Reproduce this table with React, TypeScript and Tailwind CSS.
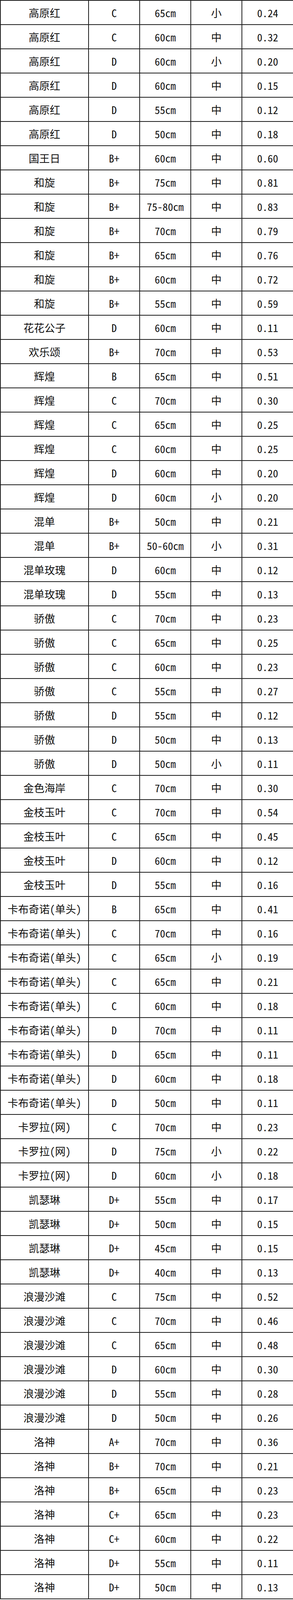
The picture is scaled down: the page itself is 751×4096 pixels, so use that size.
import React from "react"

type Row = [string, string, string, string, string]

const rows: Row[] = [
  ["高原红", "C", "65cm", "小", "0.24"],
  ["高原红", "C", "60cm", "中", "0.32"],
  ["高原红", "D", "60cm", "小", "0.20"],
  ["高原红", "D", "60cm", "中", "0.15"],
  ["高原红", "D", "55cm", "中", "0.12"],
  ["高原红", "D", "50cm", "中", "0.18"],
  ["国王日", "B+", "60cm", "中", "0.60"],
  ["和旋", "B+", "75cm", "中", "0.81"],
  ["和旋", "B+", "75-80cm", "中", "0.83"],
  ["和旋", "B+", "70cm", "中", "0.79"],
  ["和旋", "B+", "65cm", "中", "0.76"],
  ["和旋", "B+", "60cm", "中", "0.72"],
  ["和旋", "B+", "55cm", "中", "0.59"],
  ["花花公子", "D", "60cm", "中", "0.11"],
  ["欢乐颂", "B+", "70cm", "中", "0.53"],
  ["辉煌", "B", "65cm", "中", "0.51"],
  ["辉煌", "C", "70cm", "中", "0.30"],
  ["辉煌", "C", "65cm", "中", "0.25"],
  ["辉煌", "C", "60cm", "中", "0.25"],
  ["辉煌", "D", "60cm", "中", "0.20"],
  ["辉煌", "D", "60cm", "小", "0.20"],
  ["混单", "B+", "50cm", "中", "0.21"],
  ["混单", "B+", "50-60cm", "小", "0.31"],
  ["混单玫瑰", "D", "60cm", "中", "0.12"],
  ["混单玫瑰", "D", "55cm", "中", "0.13"],
  ["骄傲", "C", "70cm", "中", "0.23"],
  ["骄傲", "C", "65cm", "中", "0.25"],
  ["骄傲", "C", "60cm", "中", "0.23"],
  ["骄傲", "C", "55cm", "中", "0.27"],
  ["骄傲", "D", "55cm", "中", "0.12"],
  ["骄傲", "D", "50cm", "中", "0.13"],
  ["骄傲", "D", "50cm", "小", "0.11"],
  ["金色海岸", "C", "70cm", "中", "0.30"],
  ["金枝玉叶", "C", "70cm", "中", "0.54"],
  ["金枝玉叶", "C", "65cm", "中", "0.45"],
  ["金枝玉叶", "D", "60cm", "中", "0.12"],
  ["金枝玉叶", "D", "55cm", "中", "0.16"],
  ["卡布奇诺(单头)", "B", "65cm", "中", "0.41"],
  ["卡布奇诺(单头)", "C", "70cm", "中", "0.16"],
  ["卡布奇诺(单头)", "C", "65cm", "小", "0.19"],
  ["卡布奇诺(单头)", "C", "65cm", "中", "0.21"],
  ["卡布奇诺(单头)", "C", "60cm", "中", "0.18"],
  ["卡布奇诺(单头)", "D", "70cm", "中", "0.11"],
  ["卡布奇诺(单头)", "D", "65cm", "中", "0.11"],
  ["卡布奇诺(单头)", "D", "60cm", "中", "0.18"],
  ["卡布奇诺(单头)", "D", "50cm", "中", "0.11"],
  ["卡罗拉(网)", "C", "70cm", "中", "0.23"],
  ["卡罗拉(网)", "D", "75cm", "小", "0.22"],
  ["卡罗拉(网)", "D", "60cm", "小", "0.18"],
  ["凯瑟琳", "D+", "55cm", "中", "0.17"],
  ["凯瑟琳", "D+", "50cm", "中", "0.15"],
  ["凯瑟琳", "D+", "45cm", "中", "0.15"],
  ["凯瑟琳", "D+", "40cm", "中", "0.13"],
  ["浪漫沙滩", "C", "75cm", "中", "0.52"],
  ["浪漫沙滩", "C", "70cm", "中", "0.46"],
  ["浪漫沙滩", "C", "65cm", "中", "0.48"],
  ["浪漫沙滩", "D", "60cm", "中", "0.30"],
  ["浪漫沙滩", "D", "55cm", "中", "0.28"],
  ["浪漫沙滩", "D", "50cm", "中", "0.26"],
  ["洛神", "A+", "70cm", "中", "0.36"],
  ["洛神", "B+", "70cm", "中", "0.21"],
  ["洛神", "B+", "65cm", "中", "0.23"],
  ["洛神", "C+", "65cm", "中", "0.23"],
  ["洛神", "C+", "60cm", "中", "0.22"],
  ["洛神", "D+", "55cm", "中", "0.11"],
  ["洛神", "D+", "50cm", "中", "0.13"],
]

export default function App() {
  return (
    <div className="w-[751px] bg-white text-[#111] font-['Noto_Sans_Mono_CJK_SC','Noto_Sans_CJK_SC',sans-serif]">
      <table className="w-[751px] table-fixed border-collapse border-2 border-[#1c1c1c]">
        <colgroup>
          <col className="w-[226px]" />
          <col className="w-[131px]" />
          <col className="w-[131px]" />
          <col className="w-[131px]" />
          <col className="w-[132px]" />
        </colgroup>
        <tbody>
          {rows.map((r, i) => (
            <tr key={i} className="h-[62px]">
              {r.map((c, j) => (
                <td
                  key={j}
                  className="border-2 border-[#1c1c1c] p-0 text-center align-middle text-[27px] leading-none whitespace-nowrap"
                >
                  {c}
                </td>
              ))}
            </tr>
          ))}
        </tbody>
      </table>
    </div>
  )
}
